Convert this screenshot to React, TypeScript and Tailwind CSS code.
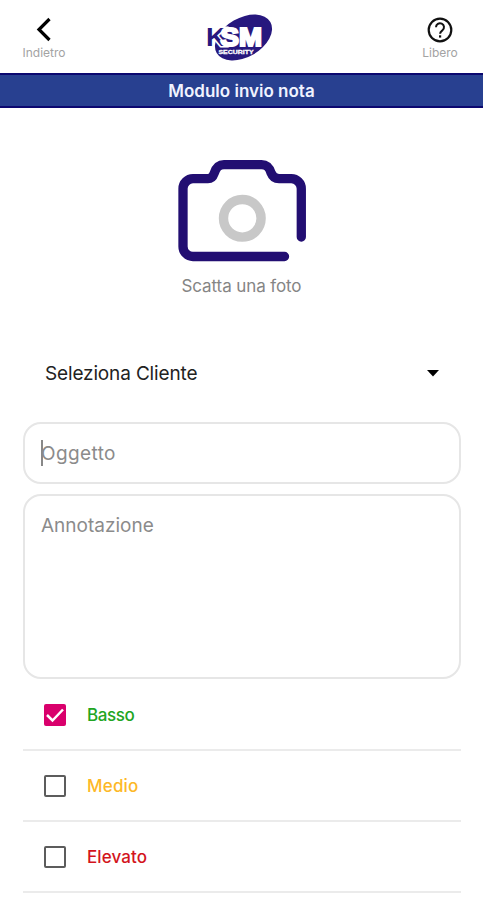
import { useState } from "react";
import clsx from "clsx";

const priorities = [
  { label: "Basso", color: "text-[#22a522]", tracking: "tracking-[-0.4px]" },
  { label: "Medio", color: "text-[#fdb827]", tracking: "tracking-[0.2px]" },
  { label: "Elevato", color: "text-[#d3141c]", tracking: "tracking-[0.1px]" },
];

const KsmLogo = () => (
  <svg width="70" height="50" viewBox="0 0 70 50" className="block">
    <ellipse cx="37.500" cy="24.500" rx="31" ry="19.500" transform="rotate(-30 37.500 24.500)" fill="#27187e" />
    <g fontFamily="Liberation Sans, sans-serif" fontWeight="700">
      <text x="0" y="32.500" fontSize="26" textLength="56" lengthAdjust="spacingAndGlyphs" style={{ paintOrder: "stroke" }}>
        <tspan fill="#27187e" stroke="#fff" strokeWidth="3">K</tspan>
        <tspan dx="-5" fill="#fff" stroke="#fff" strokeWidth="2.200">SM</tspan>
      </text>
      <text x="12.500" y="40.500" fontSize="6" fill="#fff" stroke="#fff" strokeWidth="0.3" textLength="35" lengthAdjust="spacingAndGlyphs">
        SECURITY
      </text>
    </g>
  </svg>
);

const CameraIcon = () => (
  <svg width="128" height="102" viewBox="0 0 128 102" fill="none" className="block">
    <path
      d="M123.3 77V28.700a10 10 0 0 0-10-10H101c-4 0-6.500-2-7.800-5.500C91.500 8 89.500 4.700 83.500 4.700H46c-6 0-8 3.300-9.800 8.500C35 16.700 33 18.700 30 18.700H15a10 10 0 0 0-10 10V86.500a10 10 0 0 0 10 10h91.500"
      stroke="#220e72"
      strokeWidth="9.300"
      strokeLinecap="round"
    />
    <circle cx="64.300" cy="58.300" r="18.800" stroke="#c8c8c8" strokeWidth="9.400" />
  </svg>
);

const Checkbox = ({ checked }: { checked: boolean }) => (
  <span
    className={clsx(
      "flex h-[22px] w-[22px] items-center justify-center rounded-[2px]",
      checked ? "bg-[#d9006c]" : "border-2 border-[#5c5c5c]"
    )}
  >
    {checked && (
      <svg width="22" height="22" viewBox="0 0 22 22" fill="none">
        <path d="m3 11 5.500 5.500L19 5.500" stroke="#fff" strokeWidth="2.500" />
      </svg>
    )}
  </span>
);

export default function App() {
  const [selected, setSelected] = useState("Basso");

  return (
    <div className="flex h-[900px] w-[483px] flex-col overflow-hidden bg-white font-['Inter',sans-serif]">
      {/* Header */}
      <header className="flex h-[73px] shrink-0 items-start justify-between">
        <button className="flex w-[88px] flex-col items-center pt-[17px]">
          <svg width="16" height="25" viewBox="0 0 16 25" fill="none">
            <path d="M13.500 2 3 12.500 13.500 23" stroke="#000" strokeWidth="3.200" />
          </svg>
          <span className="mt-[3px] text-[12px] leading-4 text-[#a3a3a3]">Indietro</span>
        </button>
        <div className="mr-[4px] pt-[13px]">
          <KsmLogo />
        </div>
        <button className="flex w-[86px] flex-col items-center pt-[17px]">
          <svg width="26" height="26" viewBox="0 0 26 26" fill="none" stroke="#111">
            <circle cx="13" cy="13" r="11.300" strokeWidth="2.200" />
            <path d="M9 10.200a4 4 0 1 1 6.500 3.100c-1.500 1.200-2.400 1.700-2.400 3.500" strokeWidth="2" />
            <path d="M13.100 18.300v2.300" strokeWidth="2.200" />
          </svg>
          <span className="mt-[2px] text-[12px] leading-4 text-[#a3a3a3]">Libero</span>
        </button>
      </header>

      <h1 className="flex h-[35px] shrink-0 items-center justify-center border-y-2 border-[#0c0870] bg-[#284090] pt-[2px] text-[17px] font-semibold text-[#f0f3ff]">
        Modulo invio nota
      </h1>

      {/* Photo */}
      <button className="flex flex-col items-center pt-[52px]">
        <CameraIcon />
        <span className="mt-[12px] text-[17px] leading-6 tracking-[-0.1px] text-[#858585]">Scatta una foto</span>
      </button>

      <main className="flex flex-col pr-[22px] pl-[23px]">
        <button className="mt-[51px] flex h-[48px] items-center justify-between px-[22px] pt-px text-[19px] tracking-[-0.15px] text-[#222]">
          <span className="pt-[2px]">Seleziona Cliente</span>
          <svg width="12" height="7" viewBox="0 0 12 7">
            <path d="M0 0h12L6 6.500Z" fill="#000" />
          </svg>
        </button>

        <div className="mt-[25px] flex h-[62px] items-center rounded-[18px] border-2 border-[#e6e6e6] pl-4">
          <span className="h-[26px] w-[2px] bg-[#888]" />
          <span className="-ml-[2px] pt-[3px] text-[19px] tracking-[0.4px] text-[#8b8b8b]">Oggetto</span>
        </div>

        <div className="mt-[10px] h-[185px] rounded-[18px] border-2 border-[#e6e6e6] pt-[16px] pl-4 text-[19px] leading-7 text-[#8b8b8b]">
          Annotazione
        </div>

        <ul className="pt-px">
          {priorities.map(({ label, color, tracking }) => (
            <li
              key={label}
              className="flex h-[71px] items-center border-b-2 border-[#ebebeb] pl-[21px]"
              onClick={() => setSelected(label)}
            >
              <Checkbox checked={selected === label} />
              <span className={clsx("ml-[21px] pt-[3px] text-[17px] font-medium", color, tracking)}>{label}</span>
            </li>
          ))}
        </ul>
      </main>
    </div>
  );
}
